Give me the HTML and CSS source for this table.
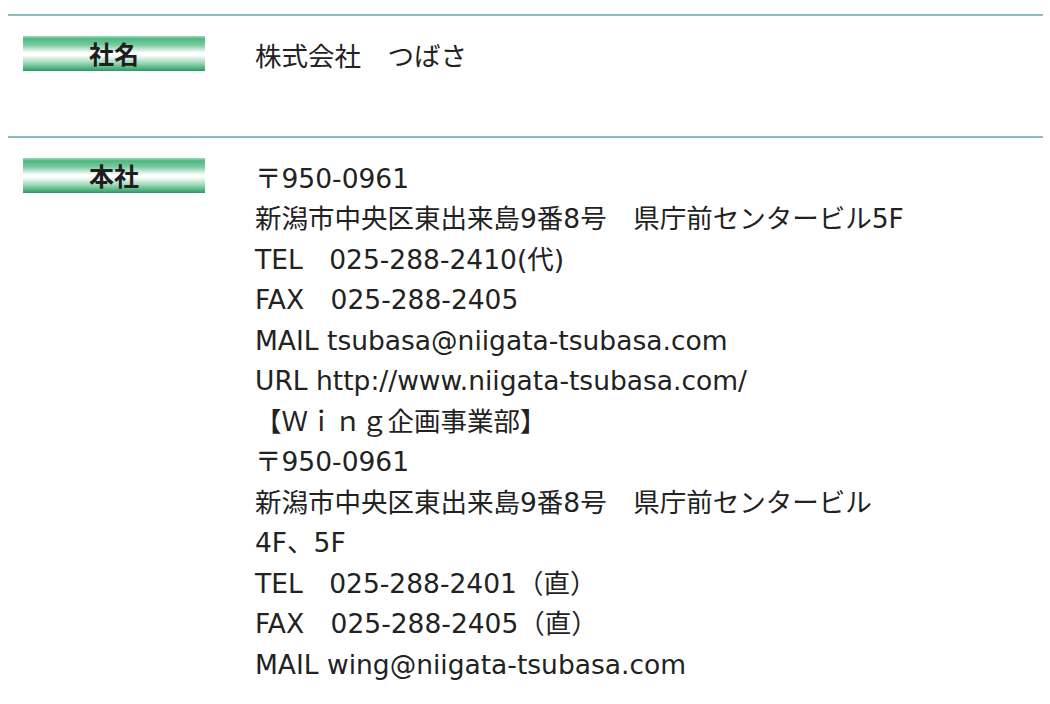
FILE: index.html
```html
<!DOCTYPE html>
<html lang="ja">
<head>
<meta charset="UTF-8">
<title>会社概要</title>
<link rel="stylesheet" href="styles.css">
</head>
<body>
  <div class="outline">
    <div class="outline__row">
      <div class="outline__label">社名</div>
      <div class="outline__text">株式会社　つばさ</div>
    </div>
    <div class="outline__row outline__row--last">
      <div class="outline__label">本社</div>
      <div class="outline__text">
        〒950-0961<br>
        新潟市中央区東出来島9番8号　県庁前センタービル5F<br>
        TEL　025-288-2410(代)<br>
        FAX　025-288-2405<br>
        MAIL tsubasa@niigata-tsubasa.com<br>
        URL http://www.niigata-tsubasa.com/<br>
        【Ｗｉｎｇ企画事業部】<br>
        〒950-0961<br>
        新潟市中央区東出来島9番8号　県庁前センタービル<br>
        4F、5F<br>
        TEL　025-288-2401（直）<br>
        FAX　025-288-2405（直）<br>
        MAIL wing@niigata-tsubasa.com
      </div>
    </div>
  </div>
</body>
</html>
```

FILE: styles.css
```css
body {
  margin: 0;
  padding: 0;
  background: #fff;
  font-family: "DejaVu Sans", "Noto Sans CJK JP", sans-serif;
  color: #222;
}

.outline {
  padding: 14px 7px 0 8px;
}

.outline__row {
  display: flex;
  align-items: flex-start;
  border-top: 2px solid #8dbdbd;
  padding: 20px 0 58px 15px;
}

.outline__row--last {
  padding-bottom: 10px;
}

.outline__label {
  flex: none;
  width: 182px;
  height: 35px;
  line-height: 35px;
  margin-right: 50px;
  text-align: center;
  font-family: "Noto Sans CJK JP", sans-serif;
  font-size: 25px;
  font-weight: bold;
  color: #1e1e1e;
  background: linear-gradient(#9fdcbc 0%, #4fb882 8%, #79c99f 25%, #ffffff 48%, #ffffff 55%, #a5dcbd 75%, #45ad76 94%, #2e9660 100%);
}

.outline__text {
  font-size: 26.5px;
  line-height: 40.5px;
  margin-top: 1px;
}
```
